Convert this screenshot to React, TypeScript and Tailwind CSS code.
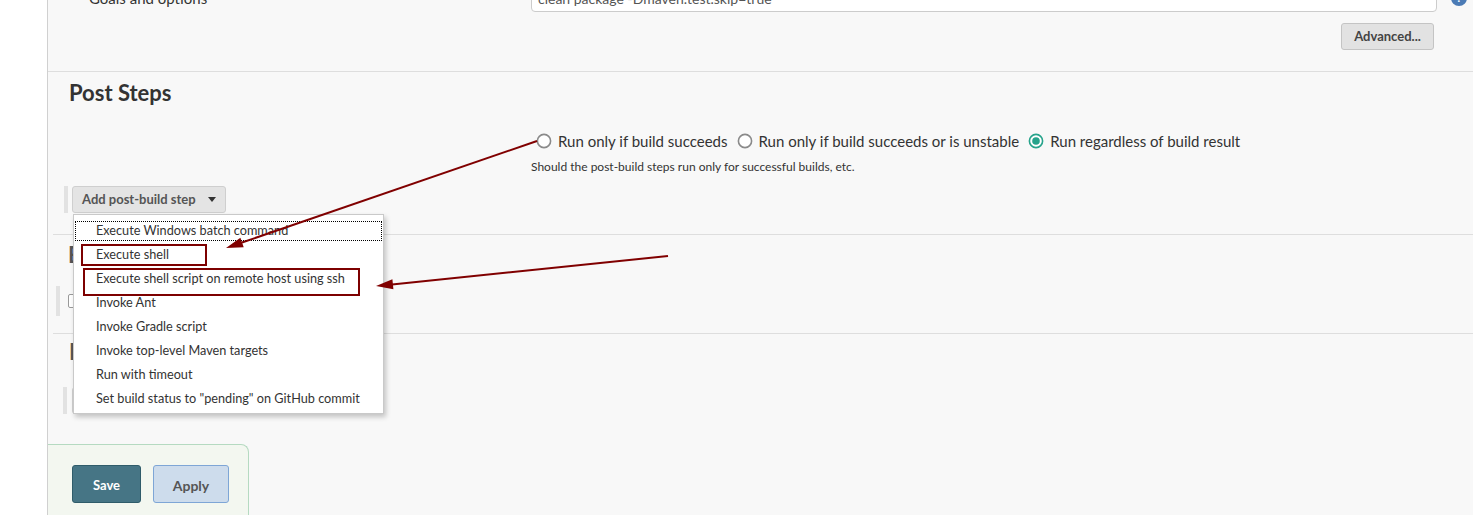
import React from "react";

const menuItems = [
  "Execute Windows batch command",
  "Execute shell",
  "Execute shell script on remote host using ssh",
  "Invoke Ant",
  "Invoke Gradle script",
  "Invoke top-level Maven targets",
  "Run with timeout",
  'Set build status to "pending" on GitHub commit',
];

function Radio({ checked }: { checked?: boolean }) {
  return (
    <svg width="16" height="16" viewBox="0 0 16 16" className="shrink-0">
      {checked ? (
        <>
          <circle cx="8" cy="8" r="6.6" fill="#fff" stroke="#26a38b" strokeWidth="1.6" />
          <circle cx="8" cy="8" r="3.8" fill="#26a38b" />
        </>
      ) : (
        <circle cx="8" cy="8" r="6.6" fill="#fff" stroke="#8a8a8a" strokeWidth="1.6" />
      )}
    </svg>
  );
}

export default function App() {
  return (
    <div
      className="relative flex h-[515px] w-[1473px] overflow-hidden bg-white text-[#333]"
      style={{ fontFamily: "Lato, 'Open Sans', sans-serif" }}
    >
      <div className="w-[47px] shrink-0 bg-white" />
      <div className="flex min-w-0 flex-1 flex-col border-l border-[#d0d0d0] bg-[#f8f8f8]">
        {/* Goals row (cut at top) */}
        <div className="mt-[-16px] flex h-[28px] items-center">
          <div className="w-[483px] shrink-0 pl-[41px] text-[15px]">Goals and options</div>
          <div className="flex h-[28px] w-[906px] shrink-0 items-center rounded-[4px] border border-[#ccc] bg-white px-[6px] text-[14px] text-[#555]">
            clean package -Dmaven.test.skip=true
          </div>
          <div className="ml-[14px] flex h-[16px] w-[16px] items-center justify-center rounded-full bg-[#4b7bb5] text-[11px] font-bold text-white">
            ?
          </div>
        </div>

        {/* Advanced */}
        <div className="mt-[11px] flex justify-end pr-[39px]">
          <button className="h-[27px] w-[93px] rounded-[3px] border border-[#c4c4c4] bg-[#e2e2e2] text-[13px] font-bold text-[#444]">
            Advanced...
          </button>
        </div>

        <div className="mt-[21px] border-t border-[#dedede]" />

        {/* Post Steps */}
        <div className="pl-[21px] pt-[8px] text-[22px] font-bold leading-[26px] text-[#333]">Post Steps</div>

        <div className="mt-[25px] flex h-[20px] items-center pl-[488px] text-[15px] text-[#333]">
          <Radio />
          <span className="ml-[6px] mr-[9px]">Run only if build succeeds</span>
          <Radio />
          <span className="ml-[6px] mr-[9px]">Run only if build succeeds or is unstable</span>
          <Radio checked />
          <span className="ml-[6px]">Run regardless of build result</span>
        </div>
        <div className="mt-[8px] pl-[483px] text-[12px] leading-[16px] text-[#333]">
          Should the post-build steps run only for successful builds, etc.
        </div>

        <div className="mt-[11px] flex h-[27px] items-center pl-[16px]">
          <div className="h-[27px] w-[4px] bg-[#e2e2e2]" />
          <button className="ml-[4px] flex h-[27px] w-[154px] items-center rounded-[3px] border border-[#cfcfcf] bg-[#e4e4e4] pl-[9px] text-[13px] font-bold text-[#555]">
            Add post-build step
            <svg width="8" height="5" viewBox="0 0 8 5" className="ml-[12px]">
              <path d="M0 0 L8 0 L4 5 Z" fill="#333" />
            </svg>
          </button>
        </div>

        <div className="ml-[5px] mt-[21px] border-t border-[#dedede]" />

        {/* Build Settings (hidden by menu) */}
        <div className="pl-[20px] pt-[7px] text-[22px] font-bold leading-[26px] text-[#555]">Build</div>
        <div className="mt-[18px] flex h-[30px] items-center pl-[8px]">
          <div className="h-[30px] w-[4px] bg-[#e2e2e2]" />
          <div className="ml-[8px] h-[14px] w-[14px] rounded-[2px] border border-[#999] bg-white" />
        </div>

        <div className="ml-[5px] mt-[17px] border-t border-[#dedede]" />

        <div className="pl-[21px] pt-[5px] text-[22px] font-bold leading-[26px] text-[#555]">Post</div>
        <div className="mt-[22px] flex h-[27px] items-center pl-[15px]">
          <div className="h-[27px] w-[4px] bg-[#e2e2e2]" />
          <div className="ml-[5px] h-[27px] w-[165px] rounded-[3px] border border-[#cfcfcf] bg-[#e4e4e4]" />
        </div>

        {/* Save / Apply bar */}
        <div className="mt-[30px] flex h-[80px] w-[201px] gap-[12px] rounded-tr-[8px] border-r border-t border-[#b5dac1] bg-[#f3f7f0] pl-[24px] pt-[20px]">
          <button className="h-[38px] w-[69px] rounded-[3px] border border-[#2f5c6a] bg-[#467585] pt-[3px] text-[13px] font-bold text-white">
            Save
          </button>
          <button className="h-[38px] w-[76px] rounded-[3px] border border-[#7ea6d6] bg-[#cddcec] pt-[3px] text-[14px] font-bold text-[#555]">
            Apply
          </button>
        </div>
      </div>

      {/* Dropdown menu overlay */}
      <div className="absolute left-[73px] top-[214px] w-[311px] border border-[#c9c9c9] bg-white px-[1px] pt-[4px] shadow-[2px_3px_5px_rgba(0,0,0,0.22)]">
        {menuItems.map((item, i) =>
          i === 0 ? (
            <div key={item} className="flex h-[24px] items-center">
              <div className="flex h-[20px] w-full items-center border border-dotted border-black pl-[20px] text-[12.7px] text-[#333]">
                {item}
              </div>
            </div>
          ) : (
            <div key={item} className="flex h-[24px] items-center pl-[21px] text-[12.7px] text-[#333]">
              {item}
            </div>
          )
        )}
        <div className="h-[2px]" />
      </div>

      {/* Annotation overlay */}
      <svg className="pointer-events-none absolute left-0 top-0" width="1473" height="515">
        <rect x="82" y="245" width="124" height="20" fill="none" stroke="#7d0000" strokeWidth="2" />
        <rect x="84" y="269" width="275" height="26" fill="none" stroke="#7d0000" strokeWidth="2" />
        <line x1="537" y1="141" x2="242" y2="242.5" stroke="#800000" strokeWidth="2" />
        <polygon points="226,248 243.7,247.2 240.4,237.7" fill="#800000" />
        <line x1="668" y1="256" x2="392" y2="284.5" stroke="#800000" strokeWidth="2" />
        <polygon points="376,286 393.4,289.3 392.4,279.3" fill="#800000" />
      </svg>
    </div>
  );
}
